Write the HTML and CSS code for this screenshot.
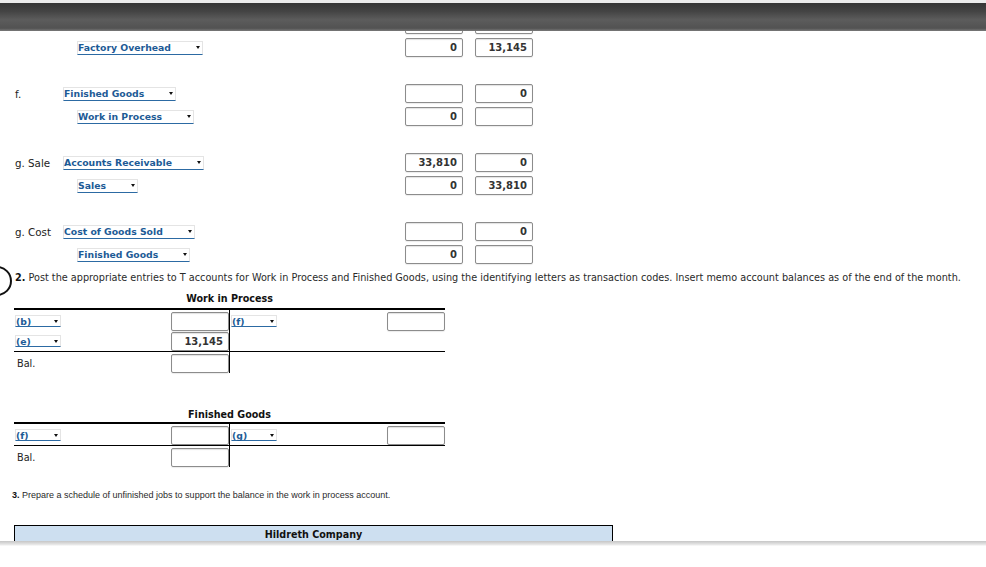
FILE: index.html
```html
<!DOCTYPE html>
<html>
<head>
<meta charset="utf-8">
<title>Job order cost entries</title>
<link rel="stylesheet" href="styles.css">
</head>
<body>
<div class="page">
  <div class="topbar"></div>

  <section class="journal">
    <div class="entry">
      <div class="jrow"><span class="lbl"></span><span class="acct"></span><input class="amt first" value=""><input class="amt" value=""></div>
      <div class="jrow"><span class="lbl"></span><span class="acct cr"><span class="dd">Factory Overhead</span></span><input class="amt first" value="0"><input class="amt" value="13,145"></div>
    </div>
    <div class="entry">
      <div class="jrow"><span class="lbl">f.</span><span class="acct"><span class="dd">Finished Goods</span></span><input class="amt first" value=""><input class="amt" value="0"></div>
      <div class="jrow"><span class="lbl"></span><span class="acct cr"><span class="dd">Work in Process</span></span><input class="amt first" value="0"><input class="amt" value=""></div>
    </div>
    <div class="entry">
      <div class="jrow"><span class="lbl">g. Sale</span><span class="acct"><span class="dd">Accounts Receivable</span></span><input class="amt first" value="33,810"><input class="amt" value="0"></div>
      <div class="jrow"><span class="lbl"></span><span class="acct cr"><span class="dd">Sales</span></span><input class="amt first" value="0"><input class="amt" value="33,810"></div>
    </div>
    <div class="entry">
      <div class="jrow"><span class="lbl">g. Cost</span><span class="acct"><span class="dd">Cost of Goods Sold</span></span><input class="amt first" value=""><input class="amt" value="0"></div>
      <div class="jrow"><span class="lbl"></span><span class="acct cr"><span class="dd">Finished Goods</span></span><input class="amt first" value="0"><input class="amt" value=""></div>
    </div>
  </section>

  <section class="part two">
    <span class="marker"></span>
    <p class="instr"><b>2.</b> Post the appropriate entries to T accounts for Work in Process and Finished Goods, using the identifying letters as transaction codes. Insert memo account balances as of the end of the month.</p>

    <div class="tacct">
      <div class="ttitle">Work in Process</div>
      <div class="tgrid">
        <div class="tcell dr top">
          <div class="trow"><span class="dd code">(b)</span><input class="amt" value=""></div>
          <div class="trow"><span class="dd code">(e)</span><input class="amt" value="13,145"></div>
        </div>
        <div class="tcell cr top">
          <div class="trow"><span class="dd code">(f)</span><input class="amt" value=""></div>
        </div>
        <div class="tcell dr">
          <div class="trow"><span class="bal">Bal.</span><input class="amt" value=""></div>
        </div>
        <div class="tcell cr"></div>
      </div>
    </div>

    <div class="tacct fg">
      <div class="ttitle">Finished Goods</div>
      <div class="tgrid">
        <div class="tcell dr top">
          <div class="trow"><span class="dd code">(f)</span><input class="amt" value=""></div>
        </div>
        <div class="tcell cr top">
          <div class="trow"><span class="dd code">(g)</span><input class="amt" value=""></div>
        </div>
        <div class="tcell dr">
          <div class="trow"><span class="bal">Bal.</span><input class="amt" value=""></div>
        </div>
        <div class="tcell cr"></div>
      </div>
    </div>
  </section>

  <section class="part three">
    <p class="instr narrow"><b>3.</b> Prepare a schedule of unfinished jobs to support the balance in the work in process account.</p>
    <table class="sched">
      <tr><th>Hildreth Company</th></tr>
    </table>
  </section>

  <div class="bottomedge"></div>
</div>
</body>
</html>
```

FILE: styles.css
```css
html, body {
  margin: 0;
  padding: 0;
  background: #fff;
}
body {
  font-family: "DejaVu Sans", Verdana, sans-serif;
  font-size: 9.7px;
  color: #222;
  overflow: hidden;
}
.page {
  position: relative;
  width: 986px;
  height: 567px;
  overflow: hidden;
}
.topbar {
  position: absolute;
  left: 0;
  top: 0;
  width: 100%;
  height: 28px;
  border-top: 3px solid #ececec;
  background: linear-gradient(#363636 0, #444 30%, #5c5c5c 60%, #525252 90%, #7a7a7a 100%);
  z-index: 5;
}
.bottomedge {
  position: absolute;
  left: 0;
  top: 541px;
  width: 100%;
  height: 26px;
  background: linear-gradient(#c6c6c6 0, #d8d8d8 2px, #ececec 4px, #fff 5px);
  z-index: 5;
}

/* journal */
.journal {
  display: flex;
  flex-direction: column;
  gap: 23px;
  padding-top: 13px;
}
.entry {
  display: flex;
  flex-direction: column;
}
.jrow {
  display: grid;
  grid-template-columns: 48px 342px 70px 58px;
  align-items: center;
  height: 23px;
  padding-left: 15px;
}
.lbl {
  font-size: 10.3px;
  color: #222;
}
.acct.cr {
  padding-left: 14px;
}

/* dropdown look */
.dd {
  position: relative;
  display: inline-block;
  height: 12px;
  line-height: 12px;
  padding: 0 31px 0 0;
  font-size: 9.3px;
  font-weight: bold;
  color: #1d5b96;
  border: 1px solid #e4e4e4;
  border-bottom: 1px solid #2c6aa3;
  white-space: nowrap;
}
.dd::after {
  content: "";
  position: absolute;
  right: 2px;
  top: 4px;
  border-left: 2.5px solid transparent;
  border-right: 2.5px solid transparent;
  border-top: 3px solid #111;
}
.dd.code {
  padding-right: 0;
  width: 46px;
  box-sizing: border-box;
}

/* amount inputs */
.amt {
  box-sizing: border-box;
  width: 58px;
  height: 19px;
  margin: 0;
  padding: 0 5px 0 3px;
  border: 1px solid #8c8c8c;
  border-radius: 2px;
  box-shadow: inset 0 1px 1px rgba(0,0,0,0.12), 0 1px 1px rgba(0,0,0,0.08);
  background: #fff;
  font-family: "DejaVu Sans", Verdana, sans-serif;
  font-size: 10px;
  font-weight: bold;
  color: #333;
  text-align: right;
  outline: none;
}

/* parts */
.part {
  position: relative;
}
.two {
  padding-top: 6px;
}
.marker {
  position: absolute;
  left: -18px;
  top: 0;
  width: 26px;
  height: 26px;
  border: 2px solid #111;
  border-radius: 50%;
}
.instr {
  margin: 0;
  padding-left: 15px;
  height: 12px;
  line-height: 12px;
  white-space: nowrap;
  color: #2a2a2a;
}
.instr b {
  color: #111;
}
.instr.narrow {
  font-family: "Liberation Sans", Arial, sans-serif;
  font-size: 9px;
  padding-left: 12px;
}

/* T accounts */
.tacct {
  width: 431px;
  margin-left: 14px;
  margin-top: 9px;
}
.tacct.fg {
  margin-top: 36px;
}
.ttitle {
  text-align: center;
  font-size: 9.6px;
  font-weight: bold;
  color: #111;
  height: 12px;
  line-height: 12px;
  margin-bottom: 3px;
}
.tacct.fg .ttitle {
  margin-bottom: 1px;
}
.tgrid {
  display: grid;
  grid-template-columns: 216px 215px;
  border-top: 2px solid #000;
}
.tcell {
  padding: 1px 0 0 1px;
}
.tcell.dr {
  border-right: 1px solid #000;
}
.tcell.top {
  border-bottom: 1px solid #000;
}
.trow {
  display: flex;
  justify-content: space-between;
  align-items: center;
  height: 20px;
}
.bal {
  padding-left: 2px;
  color: #222;
}

/* schedule */
.three {
  padding-top: 22px;
}
.sched {
  margin: 24px 0 0 14px;
  width: 599px;
  border-collapse: collapse;
}
.sched th {
  height: 20px;
  padding: 0;
  vertical-align: top;
  line-height: 17px;
  background: #cddff0;
  border: 1px solid #000;
  border-bottom: none;
  font-family: "DejaVu Sans", Verdana, sans-serif;
  font-size: 9.6px;
  font-weight: bold;
  color: #111;
}
```
